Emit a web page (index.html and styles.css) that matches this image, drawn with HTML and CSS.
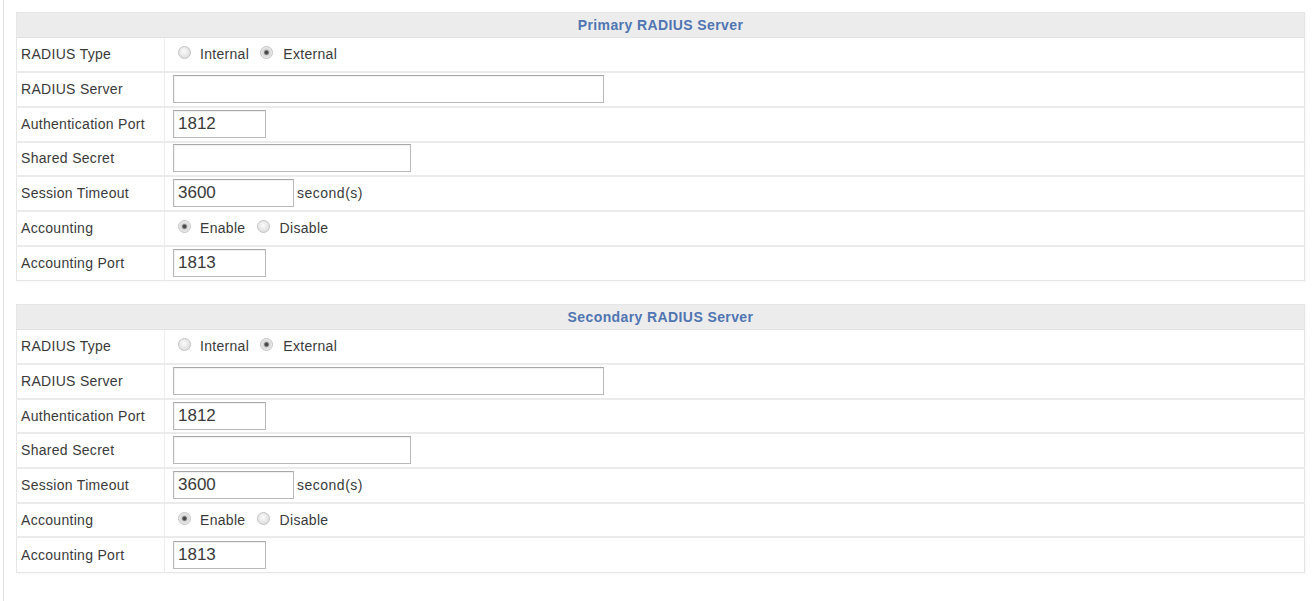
FILE: index.html
```html
<!DOCTYPE html>
<html lang="en">
<head>
  <meta charset="UTF-8">
  <title>RADIUS Settings</title>
  <link rel="stylesheet" href="styles.css">
</head>
<body>
  <div class="page">
    <table class="radius-table">
      <tr class="head-row"><th colspan="2">Primary RADIUS Server</th></tr>
      <tr>
        <td class="label">RADIUS Type</td>
        <td class="value">
          <label class="opt"><input type="radio" name="p_type"> Internal</label>
          <label class="opt"><input type="radio" name="p_type" checked> External</label>
        </td>
      </tr>
      <tr>
        <td class="label">RADIUS Server</td>
        <td class="value"><input type="text" class="field wide"></td>
      </tr>
      <tr>
        <td class="label">Authentication Port</td>
        <td class="value"><input type="text" class="field port" value="1812"></td>
      </tr>
      <tr>
        <td class="label">Shared Secret</td>
        <td class="value"><input type="text" class="field secret"></td>
      </tr>
      <tr>
        <td class="label">Session Timeout</td>
        <td class="value"><input type="text" class="field timeout" value="3600"><span class="unit">second(s)</span></td>
      </tr>
      <tr>
        <td class="label">Accounting</td>
        <td class="value">
          <label class="opt"><input type="radio" name="p_acct" checked> Enable</label>
          <label class="opt"><input type="radio" name="p_acct"> Disable</label>
        </td>
      </tr>
      <tr>
        <td class="label">Accounting Port</td>
        <td class="value"><input type="text" class="field port" value="1813"></td>
      </tr>
    </table>

    <table class="radius-table">
      <tr class="head-row"><th colspan="2">Secondary RADIUS Server</th></tr>
      <tr>
        <td class="label">RADIUS Type</td>
        <td class="value">
          <label class="opt"><input type="radio" name="s_type"> Internal</label>
          <label class="opt"><input type="radio" name="s_type" checked> External</label>
        </td>
      </tr>
      <tr>
        <td class="label">RADIUS Server</td>
        <td class="value"><input type="text" class="field wide"></td>
      </tr>
      <tr>
        <td class="label">Authentication Port</td>
        <td class="value"><input type="text" class="field port" value="1812"></td>
      </tr>
      <tr>
        <td class="label">Shared Secret</td>
        <td class="value"><input type="text" class="field secret"></td>
      </tr>
      <tr>
        <td class="label">Session Timeout</td>
        <td class="value"><input type="text" class="field timeout" value="3600"><span class="unit">second(s)</span></td>
      </tr>
      <tr>
        <td class="label">Accounting</td>
        <td class="value">
          <label class="opt"><input type="radio" name="s_acct" checked> Enable</label>
          <label class="opt"><input type="radio" name="s_acct"> Disable</label>
        </td>
      </tr>
      <tr>
        <td class="label">Accounting Port</td>
        <td class="value"><input type="text" class="field port" value="1813"></td>
      </tr>
    </table>
  </div>
</body>
</html>
```

FILE: styles.css
```css
* {
  margin: 0;
  padding: 0;
  box-sizing: border-box;
}

body {
  font-family: 'Liberation Sans', Arial, sans-serif;
  font-size: 14px;
  color: #3a3a3a;
  background: #fff;
}

.page {
  margin-left: 3px;
  border-left: 1px solid #dedede;
  min-height: 100vh;
  padding: 12px 10px 0 12px;
}

.radius-table {
  width: 100%;
  border-collapse: collapse;
  border: 1px solid #e6e6e6;
  margin-bottom: 23px;
  box-shadow: 1px 1px 2px rgba(0, 0, 0, 0.04);
}

.head-row th {
  height: 25px;
  background: #ececec;
  color: #5075b2;
  font-weight: bold;
  font-size: 14px;
  letter-spacing: 0.4px;
  text-align: center;
  border-bottom: 1px solid #e2e2e2;
}

.radius-table td {
  height: 34.7px;
  border-bottom: 2px solid #ebebeb;
  vertical-align: middle;
  letter-spacing: 0.3px;
  padding-bottom: 1px;
}

.radius-table tr:last-child td {
  border-bottom: none;
}

.label {
  width: 148px;
  padding-left: 4px;
  border-right: 1px solid #ececec;
  white-space: nowrap;
}

.value {
  padding-left: 8px;
}

.opt {
  display: inline-flex;
  align-items: center;
}

.opt input {
  appearance: none;
  -webkit-appearance: none;
  width: 13px;
  height: 13px;
  border-radius: 50%;
  border: 1px solid #c4c4c4;
  background: radial-gradient(circle at 45% 40%, #fbfbfb 0, #dcdcdc 80%);
  margin: 0 9px 3px 5px;
}

.opt input:checked {
  background: radial-gradient(circle at 50% 50%, #3c3c3c 0, #555 1.6px, #d4d4d4 3px, #f2f2f2 6px);
}

.opt + .opt input {
  margin-right: 10px;
  margin-left: 7px;
}

.field {
  height: 28px;
  border: 1px solid #b9b9b9;
  border-top-color: #a8a8a8;
  box-shadow: inset 1px 1px 1px rgba(0, 0, 0, 0.06);
  font-family: 'Liberation Sans', Arial, sans-serif;
  font-size: 17px;
  color: #3a3a3a;
  padding: 0 4px;
  vertical-align: middle;
  background: #fff;
}

.field.wide { width: 431px; }
.field.port { width: 93px; }
.field.secret { width: 238px; }
.field.timeout { width: 121px; }

.unit {
  margin-left: 3px;
  vertical-align: middle;
  letter-spacing: 0.5px;
}
```
